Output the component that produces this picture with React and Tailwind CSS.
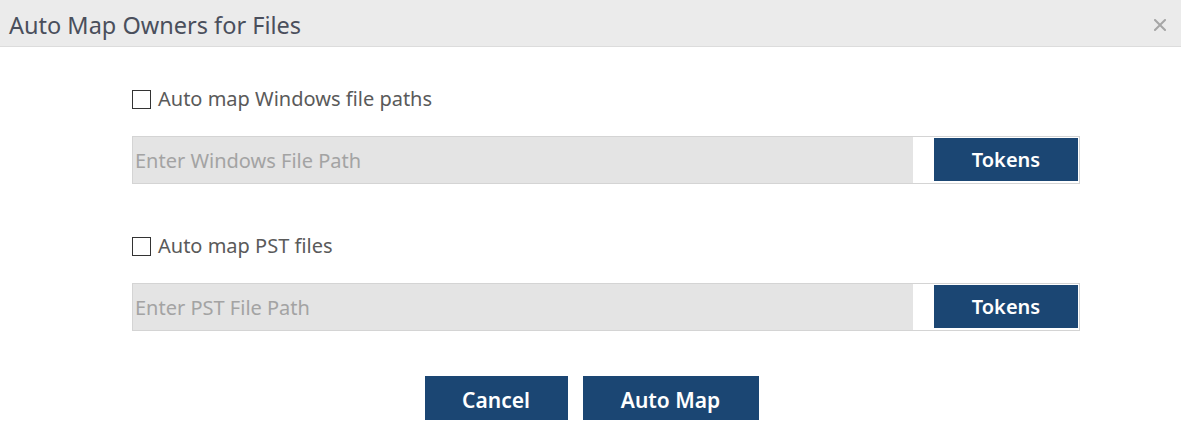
import React from "react";

const FONT = { fontFamily: '"Noto Sans", "Open Sans", sans-serif' };

function PathRow({ checkLabel, placeholder }) {
  return (
    <div>
      <label className="flex h-[24px] items-center gap-[7px] text-[20px] text-[#5a5a5a]">
        <span className="inline-block h-[19px] w-[19px] shrink-0 border border-[#333] bg-white" />
        <span className="leading-none">{checkLabel}</span>
      </label>
      <div className="mt-[25px] flex h-[48px] border border-[#d4d4d4] bg-white">
        <input
          disabled
          placeholder={placeholder}
          className="h-full w-[780px] bg-[#e4e4e4] px-[2px] text-[20px] text-[#555] placeholder:text-[#a3a3a3]"
        />
        <div className="flex-1" />
        <button
          type="button"
          className="mb-[2px] mr-px mt-[1px] w-[144px] bg-[#1b4673] text-[20px] font-semibold text-white"
        >
          Tokens
        </button>
      </div>
    </div>
  );
}

export default function App() {
  return (
    <div className="h-[433px] w-[1181px] bg-white" style={FONT}>
      <div className="flex h-[47px] items-center justify-between border-b border-[#dcdcdc] bg-[#ebebeb] pl-[9px] pr-[15px] pt-[6px]">
        <h2 className="text-[23.5px] leading-none text-[#4a4f5c]">Auto Map Owners for Files</h2>
        <svg width="12" height="12" viewBox="0 0 12 12" className="mt-[-3px]">
          <path d="M1 1L11 11M11 1L1 11" stroke="#a6a6a6" strokeWidth="2" strokeLinecap="square" />
        </svg>
      </div>

      <div className="ml-[132px] mr-[101px] pt-[40px]">
        <PathRow checkLabel="Auto map Windows file paths" placeholder="Enter Windows File Path" />
        <div className="h-[50px]" />
        <PathRow checkLabel="Auto map PST files" placeholder="Enter PST File Path" />
      </div>

      <div className="mt-[45px] flex justify-center gap-[15px] pl-[2px]">
        <button type="button" className="h-[44px] w-[143px] bg-[#1b4673] pt-[5px] text-[21px] font-semibold text-white">
          Cancel
        </button>
        <button type="button" className="h-[44px] w-[176px] bg-[#1b4673] pt-[5px] text-[21px] font-semibold text-white">
          Auto Map
        </button>
      </div>
    </div>
  );
}
